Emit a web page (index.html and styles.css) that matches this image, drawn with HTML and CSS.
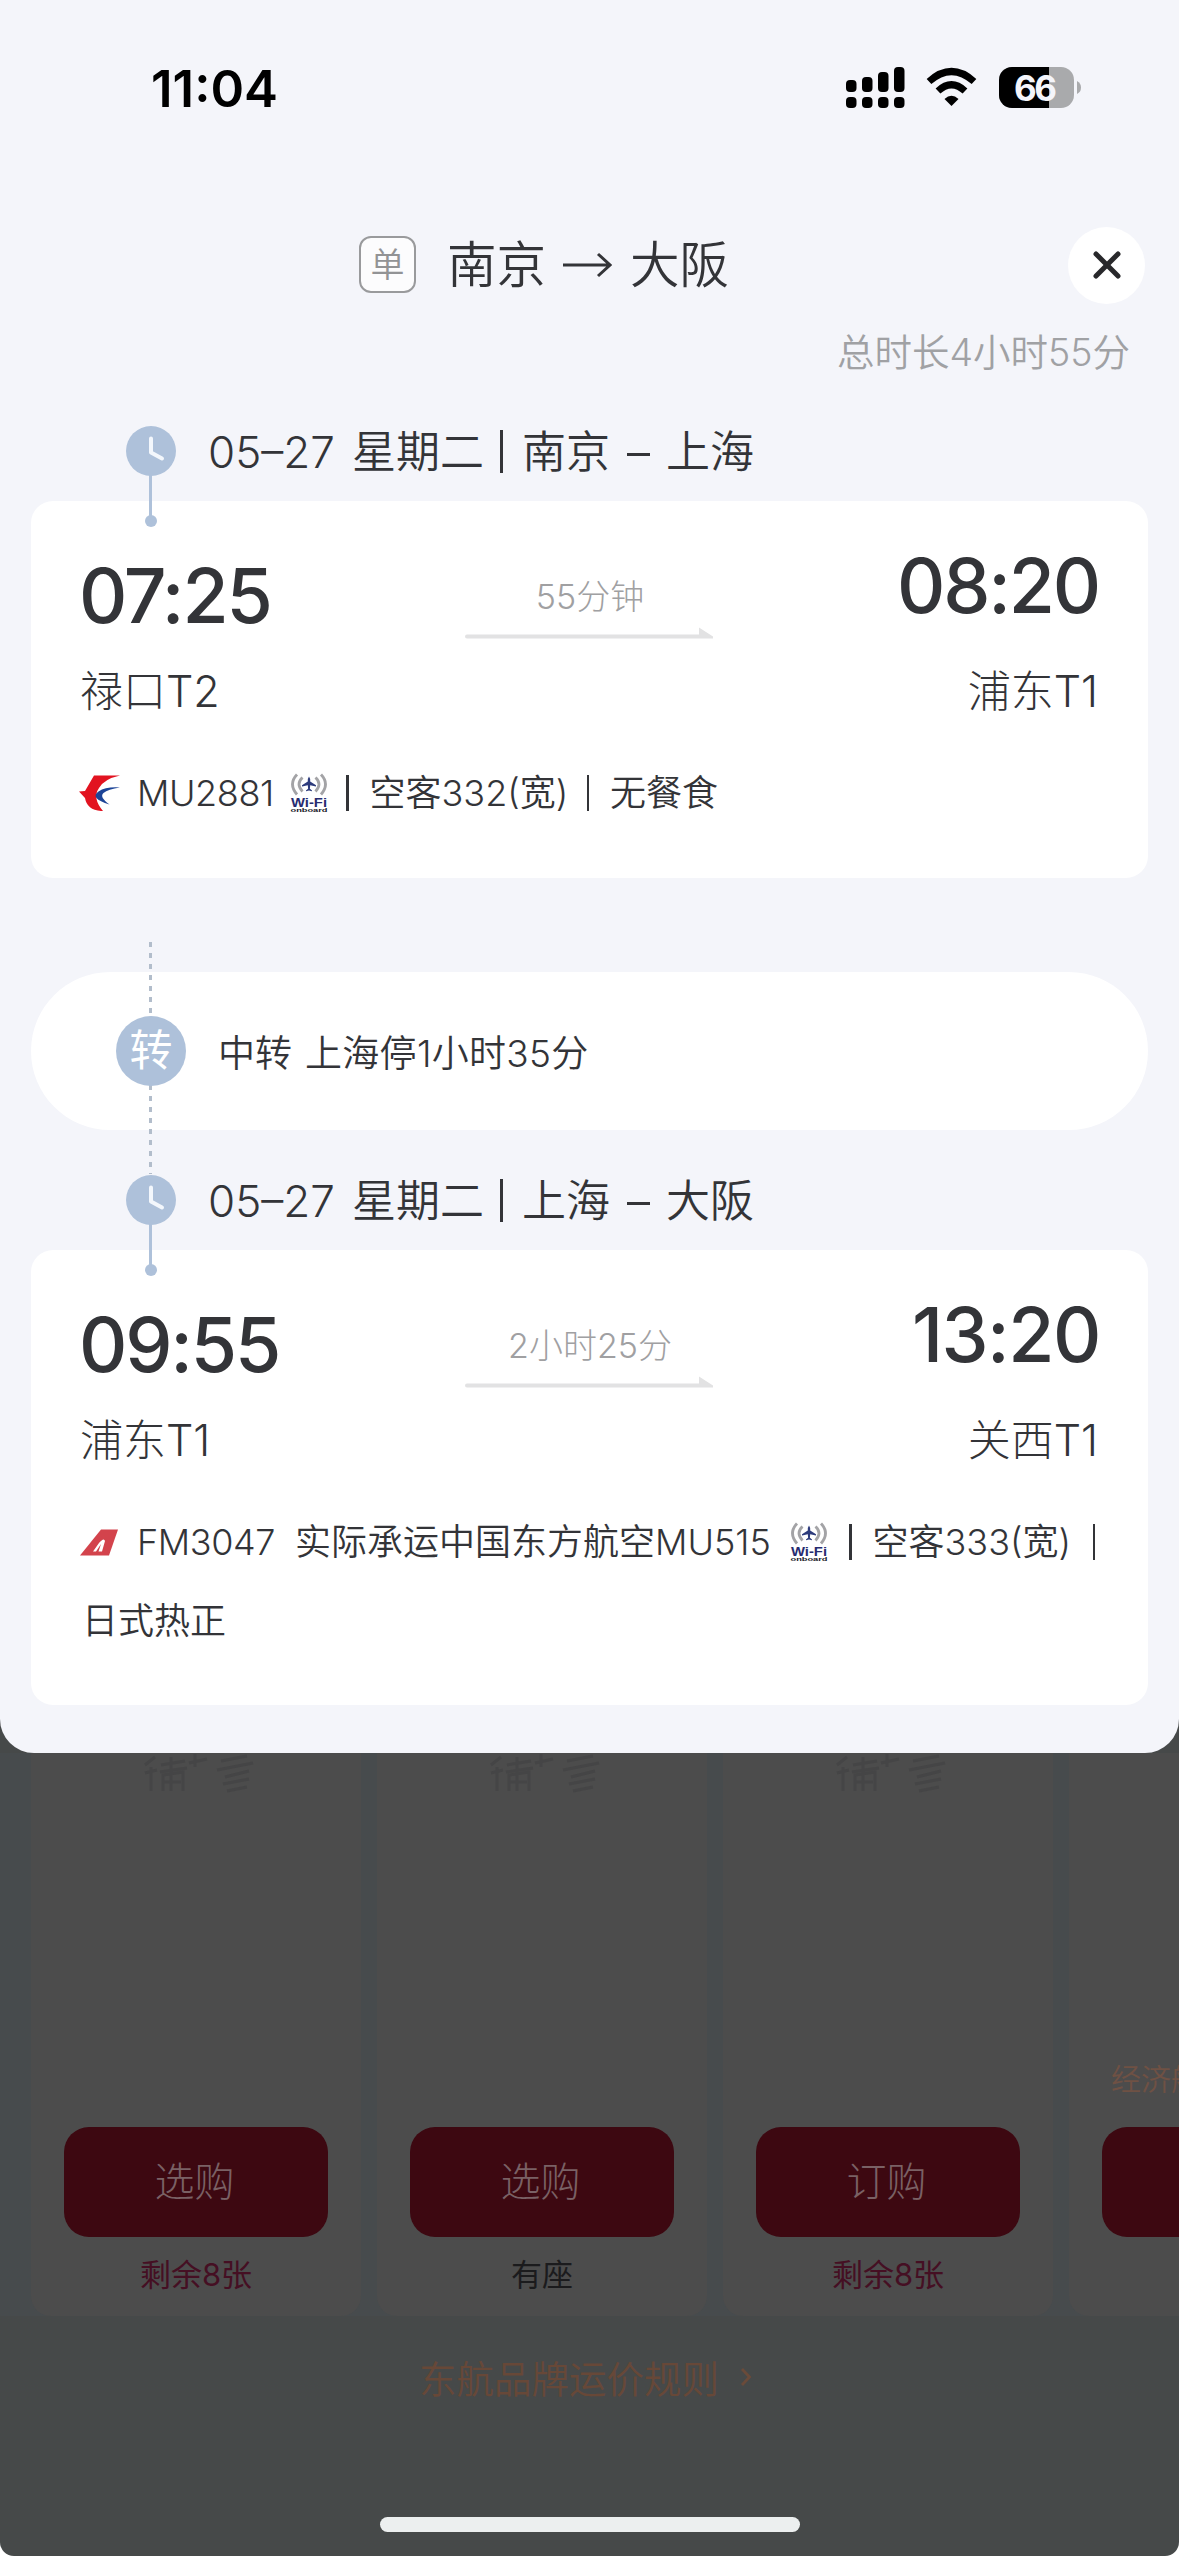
FILE: index.html
```
<!DOCTYPE html>
<html lang="zh-CN">
<head>
<meta charset="utf-8">
<title>航班详情</title>
<link rel="stylesheet" href="styles.css">
</head>
<body>
<svg class="defs" width="0" height="0" aria-hidden="true">
  <symbol id="clock" viewBox="0 0 50 50">
    <circle cx="25" cy="25" r="25" fill="#aec1da"/>
    <path d="M25 12.500V26.500L36 32.500" fill="none" stroke="#f3f7fc" stroke-width="4" stroke-linecap="round" stroke-linejoin="round"/>
  </symbol>
  <symbol id="leg-arrow" viewBox="0 0 248 12">
    <path d="M2 7.500H234V0.500L248 9.500V11.500H2Q0 11.500 0 9.500T2 7.500Z" fill="#e2e2e3"/>
  </symbol>
  <symbol id="onboard" viewBox="0 0 38 23">
    <g fill="none" stroke="#a3a3a6" stroke-width="2.800">
      <path d="M12.500 4.500Q5.500 11 12.500 18.500"/>
      <path d="M7 1.500Q-2 11 7 21.500"/>
      <path d="M25.500 4.500Q32.500 11 25.500 18.500"/>
      <path d="M31 1.500Q40 11 31 21.500"/>
    </g>
    <path d="M19 3.500Q20.300 5 20.200 8.500L26 12.200V13.600L20.200 12.200L19.900 15.800L22 17.400V18.300L19 17.500L16 18.300V17.400L18.100 15.800L17.800 12.200L12 13.600V12.200L17.800 8.500Q17.700 5 19 3.500Z" fill="#2d3b7c"/>
  </symbol>
  <symbol id="watermark" viewBox="0 0 112 40">
    <g fill="none" stroke="#434344" stroke-width="3" opacity=".75">
      <path d="M2 12L12 4M8 14V38M2 20L14 17M18 12L42 8M17 19L44 15M20 38V22L40 19V38M28 4V38M20 29H38"/>
      <path d="M46 10L64 6M52 1V14M78 8L104 3M74 17L110 10M82 24L106 18M80 31L106 26M84 38L104 34"/>
    </g>
  </symbol>
</svg>

<div class="screen">
  <main class="sheet">
    <div class="status">
      <span class="status-time">11:04</span>
      <svg class="status-icons" width="238" height="44" viewBox="0 0 238 44">
        <g fill="#000">
          <rect x="0" y="15" width="10.500" height="12" rx="4"/><rect x="16" y="12" width="10.500" height="15" rx="4"/><rect x="32" y="7" width="10.500" height="20" rx="4"/><rect x="48" y="2" width="10.500" height="25" rx="4"/>
          <rect x="0" y="32" width="10.500" height="11" rx="4"/><rect x="16" y="32" width="10.500" height="11" rx="4"/><rect x="32" y="32" width="10.500" height="11" rx="4"/><rect x="48" y="32" width="10.500" height="11" rx="4"/>
          <path d="M105.500 41L98.500 34Q105.500 27.500 112.500 34Z"/>
        </g>
        <g fill="none" stroke="#000" stroke-width="7">
          <path d="M83 16.500Q105.500-3.500 128 16.500"/>
          <path d="M92 26Q105.500 13.500 119 26"/>
        </g>
        <clipPath id="cell"><rect x="153" y="2" width="75" height="41" rx="13"/></clipPath>
        <g clip-path="url(#cell)"><rect x="153" y="0" width="76" height="44" fill="#a9aaac"/><rect x="153" y="0" width="50" height="44" fill="#000"/></g>
        <path d="M231 16Q235 18 235 22.500T231 29Z" fill="#a9aaac"/>
        <text x="189.500" y="35.500" text-anchor="middle" textLength="43" class="battery">66</text>
      </svg>
    </div>

    <header class="title">
      <span class="badge">单</span>
      <h1><span>南京</span>
        <svg width="50" height="28" viewBox="0 0 50 28"><path d="M1 14H48M36 3L48 14L36 25" fill="none" stroke="#333438" stroke-width="3"/></svg>
        <span>大阪</span></h1>
      <button class="close" aria-label="关闭"><svg width="28" height="28" viewBox="0 0 28 28"><path d="M3 3L25 25M25 3L3 25" stroke="#28282b" stroke-width="5" stroke-linecap="round"/></svg></button>
    </header>
    <p class="total">总时长4小时55分</p>

    <section class="leg">
      <div class="date">
        <svg class="clock"><use href="#clock"/></svg><i class="stem"></i>
        <span class="num">05–27</span><span class="week">星期二</span><i class="bar"></i><span>南京</span><i class="dash"></i><span>上海</span>
      </div>
      <div class="card first">
        <div class="route">
          <div class="stop"><b class="time">07:25</b><span class="port">禄口T2</span></div>
          <div class="span"><span>55分钟</span><svg class="arrow"><use href="#leg-arrow"/></svg></div>
          <div class="stop end"><b class="time">08:20</b><span class="port">浦东T1</span></div>
        </div>
        <div class="info">
          <svg class="airline" width="42" height="37" viewBox="0 0 42 37"><path d="M15 0.500H41Q25 4 20 13Q13 23 24 36H22Q8 35 6 23L0 16.500L6 16Z" fill="#e21320"/><path d="M41 12.500Q27 11.500 19.500 16.500Q10 23 30.500 29.500Q20 22 24.500 18Q29 14 41 12.500Z" fill="#1c4497"/></svg>
          <span class="flight">MU2881</span>
          <svg class="wifi" viewBox="0 0 38 40"><use href="#onboard" width="38" height="23"/><text x="1" y="33.500" textLength="36" lengthAdjust="spacingAndGlyphs" class="wifi-name">Wi-Fi</text><text x="0.500" y="39" textLength="37" lengthAdjust="spacingAndGlyphs" class="wifi-sub">onboard</text></svg>
          <i class="bar"></i><span class="plane">空客332(宽)</span><i class="bar"></i><span>无餐食</span>
        </div>
      </div>
    </section>

    <section class="transfer">
      <span class="turn">转</span>
      <span class="where">中转</span><span class="wait">上海停1小时35分</span>
    </section>

    <section class="leg">
      <div class="date">
        <svg class="clock"><use href="#clock"/></svg><i class="stem"></i>
        <span class="num">05–27</span><span class="week">星期二</span><i class="bar"></i><span>上海</span><i class="dash"></i><span>大阪</span>
      </div>
      <div class="card second">
        <div class="route">
          <div class="stop"><b class="time">09:55</b><span class="port">浦东T1</span></div>
          <div class="span"><span>2小时25分</span><svg class="arrow"><use href="#leg-arrow"/></svg></div>
          <div class="stop end"><b class="time late">13:20</b><span class="port">关西T1</span></div>
        </div>
        <div class="info">
          <svg class="airline" width="42" height="37" viewBox="0 0 42 37"><path d="M22 5.500H39L30 31.500H1Z" fill="#d3434c"/><path d="M14 27.500L20 19Q25 13 26 17L23 27.500H19.500L22 20L17 27.500Z" fill="#fff"/></svg>
          <span class="flight">FM3047</span>
          <span class="operator">实际承运中国东方航空MU515</span>
          <svg class="wifi" viewBox="0 0 38 40"><use href="#onboard" width="38" height="23"/><text x="1" y="33.500" textLength="36" lengthAdjust="spacingAndGlyphs" class="wifi-name">Wi-Fi</text><text x="0.500" y="39" textLength="37" lengthAdjust="spacingAndGlyphs" class="wifi-sub">onboard</text></svg>
          <i class="bar"></i><span class="plane">空客333(宽)</span><i class="bar"></i>
        </div>
        <p class="meal">日式热正</p>
      </div>
    </section>
  </main>

  <section class="fares">
    <article class="fare"><svg class="mark"><use href="#watermark"/></svg><span class="buy">选购</span><span class="left">剩余8张</span></article>
    <article class="fare"><svg class="mark"><use href="#watermark"/></svg><span class="buy">选购</span><span class="left seat">有座</span></article>
    <article class="fare"><svg class="mark"><use href="#watermark"/></svg><span class="buy">订购</span><span class="left">剩余8张</span></article>
    <article class="fare"><span class="cabin">经济舱</span><span class="buy"></span></article>
  </section>
  <p class="rules">东航品牌运价规则<svg width="12" height="20" viewBox="0 0 12 20"><path d="M2 2L9.500 10L2 18" fill="none" stroke="#6a4b3a" stroke-width="2.800"/></svg></p>
  <i class="home"></i>
</div>
</body>
</html>
```
FILE: styles.css
```
* { box-sizing: border-box; margin: 0; padding: 0; }
html, body { width: 1179px; height: 2556px; overflow: hidden; background: #fff; }
body { font-family: Inter, "Noto Sans CJK SC", sans-serif; color: #333438; }
i { font-style: normal; flex: none; display: block; }
svg { flex: none; display: block; }
span { white-space: nowrap; flex: none; }
.defs { position: absolute; }

.screen { width: 1179px; height: 2556px; display: flex; flex-direction: column; background: #464949; border-radius: 0 0 14px 14px; overflow: hidden; }
.sheet { height: 1753px; flex: none; background: #f4f5fa; border-radius: 0 0 34px 34px; padding: 0 31px; }

.status { height: 187px; padding: 65px 0 0 120px; display: flex; justify-content: space-between; align-items: flex-start; }
.status-time { font-size: 51px; font-weight: 600; line-height: 47px; color: #000; }
.status-icons { margin-right: 64px; }
.battery { font: 700 35px Inter, sans-serif; fill: #f4f5fa; }
.wifi-name { font: 700 12.500px "Liberation Sans", sans-serif; fill: #272b70; }
.wifi-sub { font: 700 6px "Liberation Sans", sans-serif; fill: #151523; }

.title { height: 156px; display: flex; align-items: center; padding-left: 328px; }
.badge { width: 57px; height: 57px; border: 2px solid #999a9c; border-radius: 12px; background: #fcfcfd; font-size: 34px; font-weight: 350; line-height: 54px; text-align: center; color: #929395; margin-top: -2px; }
.title h1 { display: flex; align-items: center; margin-left: 31px; font-size: 49.500px; font-weight: 350; line-height: 60px; }
.title h1 svg { margin: 0 18px 0 16px; }
.close { width: 77px; height: 77px; border: 0; border-radius: 50%; background: #fff; display: grid; place-items: center; margin: 0 3px 0 auto; }
.total { height: 65px; line-height: 20px; padding-right: 18px; text-align: right; font-size: 37.500px; font-weight: 350; color: #a0a1a4; }

.date { position: relative; height: 93px; display: flex; align-items: center; padding: 0 0 7px 95px; font-size: 44px; font-weight: 350; line-height: 50px; }
.date > span { padding-top: 2px; }
.clock { width: 50px; height: 50px; margin-right: 32px; }
.stem { position: absolute; left: 118px; top: 67px; width: 3px; height: 48px; background: #aec1da; }
.stem::after { content: ""; position: absolute; left: -4.500px; top: 40px; width: 12px; height: 12px; border-radius: 50%; background: #aec1da; }
.num { width: 144px; }
.week { width: 132px; }
.date .bar { width: 3px; height: 43px; background: #333438; margin: 0 19px 0 16px; }
.dash { width: 23px; height: 3px; background: #333438; margin: 6px 16px 0 17px; }

.card { background: #fff; border-radius: 22px; padding: 0 50px; }
.first { height: 377px; }
.second { height: 455px; }
.route { display: flex; height: 250px; }
.stop { width: 240px; display: flex; flex-direction: column; padding-top: 54px; }
.time { font-size: 75px; font-weight: 500; line-height: 82px; letter-spacing: -2.200px; margin-left: -2px; }
.port { font-size: 43px; font-weight: 300; line-height: 60px; margin: 24px 0 0 -1px; }
.end { align-items: flex-end; padding-top: 44px; margin-left: auto; }
.end .time { margin-right: -1px; }
.end .late { letter-spacing: -1.500px; margin-right: -2px; }
.end .port { margin-top: 34px; }
.span { width: 248px; margin-left: 145px; padding-top: 78px; text-align: center; font-size: 34px; font-weight: 300; line-height: 36px; color: #a0a0a2; }
.arrow { width: 248px; height: 12px; margin: 12px 0 0 -1px; }
.info { height: 84px; display: flex; align-items: center; font-size: 36px; font-weight: 350; line-height: 44px; }
.airline { margin: 0 16px 0 -2px; }
.flight { width: 153px; letter-spacing: -.4px; }
.wifi { width: 38px; height: 40px; }
.info .bar { width: 2.500px; height: 36px; background: #333438; margin-left: 18px; }
.info .bar + span { margin-left: 21px; }
.first .plane { width: 199px; }
.second .plane { width: 202px; }
.operator { width: 495px; margin-left: 5px; }
.operator ~ .bar:nth-of-type(1) { margin-left: 21px; }
.meal { font-size: 36px; font-weight: 350; line-height: 74px; padding-left: 1px; }

.transfer { position: relative; height: 158px; margin: 94px 0 27px; border-radius: 79px; background: #fff; display: flex; align-items: center; padding-left: 85px; font-size: 37px; }
.transfer::before { content: ""; position: absolute; left: 118px; top: -30px; width: 3px; height: 232px; background: repeating-linear-gradient(#b2bdcb 0 5px, transparent 5px 11px); }
.turn { position: relative; width: 70px; height: 70px; border-radius: 50%; background: #aec1da; color: #fff; font-size: 43px; line-height: 69px; text-align: center; margin-right: 32px; }
.where, .wait { font-weight: 350; margin-top: -1px; }
.where { width: 87px; }
.wait { letter-spacing: .3px; }

.fares { height: 563px; flex: none; display: flex; gap: 16px; padding-left: 31px; background: #474b4d; overflow: hidden; }
.fare { flex: none; width: 330px; background: #4c4c4c; border-radius: 0 0 20px 20px; display: flex; flex-direction: column; align-items: center; position: relative; padding-top: 374px; font-weight: 300; }
.buy { width: 264px; height: 110px; flex: none; border-radius: 25px; background: #3d0811; color: #7a6165; font-size: 40px; line-height: 109px; text-align: center; text-indent: -3px; }
.left { font-size: 31px; line-height: 40px; margin-top: 18px; color: #450f23; font-weight: 400; }
.seat { color: #1b1b1d; }
.mark { position: absolute; top: 0; left: 112px; width: 112px; height: 40px; }
.cabin { position: absolute; left: 42px; top: 306px; font-size: 30px; line-height: 40px; color: #6f5144; font-weight: 350; }
.rules { display: flex; align-items: center; height: 130px; padding: 0 0 9px 419px; font-size: 37.500px; font-weight: 350; color: #674838; gap: 21px; }
.home { width: 420px; height: 15px; border-radius: 8px; background: #ecefef; margin: 71px auto 0; }
```
